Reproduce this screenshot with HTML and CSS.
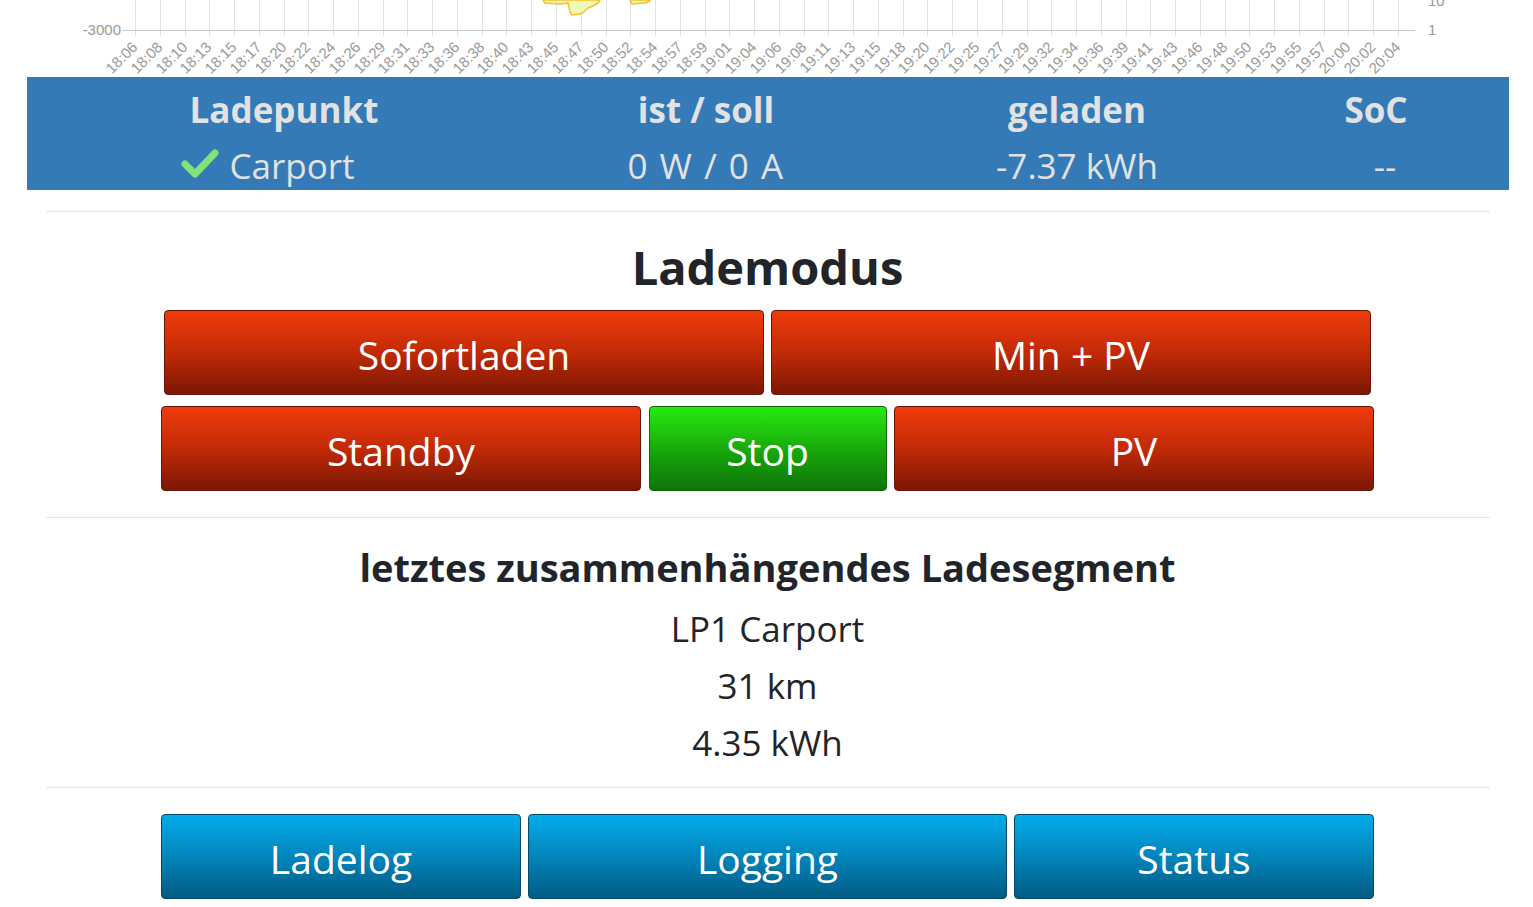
FILE: index.html
```html
<!DOCTYPE html>
<html lang="de">
<head>
<meta charset="utf-8">
<title>openWB</title>
<link rel="stylesheet" href="styles.css">
</head>
<body>
<div class="page">
  <div class="chart">
    <svg id="chart" width="1533" height="77" viewBox="0 0 1533 77" xmlns="http://www.w3.org/2000/svg">
      <g id="grid" stroke="#e3e3e3" stroke-width="1"></g>
      <polygon points="543,0 545,3 560,4 568,3 570,12 572,15 580,14 584,12 588,8 593,6 598,3 600,0" fill="#eef8b8" stroke="#f6c02a" stroke-width="1.5"/>
      <polygon points="630,0 632,4 645,3 650,1 650,0" fill="#eef8b8" stroke="#f6c02a" stroke-width="1.5"/>
      <line x1="122" y1="30.5" x2="1415" y2="30.5" stroke="#c8c8c8" stroke-width="1"/>
      <text x="121" y="35" text-anchor="end" class="axis-label">-3000</text>
      <text x="1428" y="35" class="axis-label">1</text>
      <text x="1428" y="6" class="axis-label">10</text>
      <g id="labels"></g>
    </svg>
  </div>

  <div class="lp-table">
    <div class="lp-row lp-head">
      <div class="c1">Ladepunkt</div>
      <div class="c2">ist / soll</div>
      <div class="c3">geladen</div>
      <div class="c4">SoC</div>
    </div>
    <div class="lp-row lp-data">
      <div class="c1 lp-name"><svg class="check" width="38" height="30" viewBox="0 0 38 30"><polyline points="4,15 14,25 34,4" fill="none" stroke="#84e27c" stroke-width="7" stroke-linecap="round" stroke-linejoin="round"/></svg><span>Carport</span></div>
      <div class="c2 power">0 W / 0 A</div>
      <div class="c3">-7.37 kWh</div>
      <div class="c4 soc">--</div>
    </div>
  </div>

  <hr class="sep sep1">

  <h2 class="title">Lademodus</h2>
  <div class="btn-row row1">
    <button class="btn red w600">Sofortladen</button>
    <button class="btn red w600">Min + PV</button>
  </div>
  <div class="btn-row row2">
    <button class="btn red w480">Standby</button>
    <button class="btn green w238">Stop</button>
    <button class="btn red w480">PV</button>
  </div>

  <hr class="sep sep2">

  <h3 class="subtitle">letztes zusammenhängendes Ladesegment</h3>
  <div class="seg">
    <div>LP1 Carport</div>
    <div>31 km</div>
    <div>4.35 kWh</div>
  </div>

  <hr class="sep sep3">

  <div class="btn-row row3">
    <button class="btn blue w360">Ladelog</button>
    <button class="btn blue w479">Logging</button>
    <button class="btn blue w360">Status</button>
  </div>
</div>
<script src="chart.js"></script>
</body>
</html>
```
FILE: chart.js
```js
(function () {
  var labels = ["18:06","18:08","18:10","18:13","18:15","18:17","18:20","18:22","18:24","18:26","18:29","18:31","18:33","18:36","18:38","18:40","18:43","18:45","18:47","18:50","18:52","18:54","18:57","18:59","19:01","19:04","19:06","19:08","19:11","19:13","19:15","19:18","19:20","19:22","19:25","19:27","19:29","19:32","19:34","19:36","19:39","19:41","19:43","19:46","19:48","19:50","19:53","19:55","19:57","20:00","20:02","20:04"];
  var ns = "http://www.w3.org/2000/svg";
  var grid = document.getElementById("grid");
  var lab = document.getElementById("labels");
  var x0 = 135, x1 = 1398;
  var step = (x1 - x0) / (labels.length - 1);
  for (var i = 0; i < labels.length; i++) {
    var x = Math.round(x0 + i * step) + 0.5;
    var l = document.createElementNS(ns, "line");
    l.setAttribute("x1", x); l.setAttribute("x2", x);
    l.setAttribute("y1", 0); l.setAttribute("y2", 36);
    grid.appendChild(l);
    var t = document.createElementNS(ns, "text");
    t.setAttribute("class", "tick-label");
    t.setAttribute("text-anchor", "end");
    t.setAttribute("transform", "translate(" + (x + 3) + ",48) rotate(-45)");
    t.textContent = labels[i];
    lab.appendChild(t);
  }
})();
```
FILE: styles.css
```css
html, body {
  margin: 0;
  padding: 0;
  background: #ffffff;
}
body {
  font-family: "Open Sans", "Noto Sans", "DejaVu Sans", sans-serif;
  color: #212529;
  width: 1533px;
  overflow: hidden;
}
.page {
  display: flex;
  flex-direction: column;
  align-items: center;
  padding-left: 2px;
}
.chart {
  height: 77px;
  width: 1533px;
  overflow: hidden;
  margin-left: -2px;
}
.chart svg {
  display: block;
}
.axis-label {
  font-family: "Liberation Sans", Arial, sans-serif;
  font-size: 15px;
  fill: #9a9a9a;
}
.tick-label {
  font-family: "Liberation Sans", Arial, sans-serif;
  font-size: 15px;
  fill: #9a9a9a;
}
.lp-table {
  width: 1482px;
  align-self: flex-start;
  margin-left: 25px;
  background: #337ab7;
  color: #e2e2e2;
}
.lp-row {
  display: grid;
  grid-template-columns: 514px 330px 412px 186px 40px;
  text-align: center;
  white-space: nowrap;
}
.lp-head {
  height: 64px;
  align-items: center;
  font-weight: 700;
  font-size: 35px;
}
.lp-data {
  height: 49px;
  align-items: center;
  font-size: 35px;
}
.lp-name {
  display: flex;
  justify-content: center;
  align-items: center;
  gap: 10px;
  padding-right: 32px;
}
.check {
  display: block;
  margin-top: -4px;
}
.power {
  letter-spacing: 1.5px;
}
.soc {
  padding-left: 18px;
}
.sep {
  width: 1444px;
  border: 0;
  border-top: 1px solid #e6e6e6;
  margin: 0;
  box-sizing: border-box;
}
.sep1 { margin-top: 21px; }
.sep2 { margin-top: 26px; }
.sep3 { margin-top: 16px; }
.title {
  margin: 27px 0 0;
  font-size: 47px;
  line-height: 56px;
  font-weight: 700;
}
.btn-row {
  display: flex;
  gap: 7px;
}
.row1 { margin-top: 15px; }
.row2 { margin-top: 11px; gap: 7.5px; }
.row3 { margin-top: 26px; }
.btn {
  font-family: "Open Sans", "Noto Sans", sans-serif;
  font-size: 39px;
  color: #ffffff;
  height: 85px;
  border-radius: 4px;
  padding: 4px 0 0;
  margin: 0;
  box-sizing: border-box;
  cursor: pointer;
}
.red {
  background: linear-gradient(to bottom, #ef3b0d 0%, #c22a07 50%, #7a1704 100%);
  border: 1px solid #6a1403;
}
.green {
  background: linear-gradient(to bottom, #26ea0e 0%, #169f0b 60%, #0e7508 100%);
  border: 1px solid #0c6507;
}
.blue {
  background: linear-gradient(to bottom, #04abec 0%, #0285bb 50%, #035b83 100%);
  border: 1px solid #024a6a;
}
.w600 { width: 600px; }
.w480 { width: 480px; }
.w238 { width: 238px; }
.w360 { width: 360px; }
.w479 { width: 479px; }
.subtitle {
  margin: 24px 0 0;
  font-size: 38px;
  line-height: 50px;
  font-weight: 700;
}
.seg {
  margin-top: 8px;
  text-align: center;
  font-size: 35px;
  line-height: 57px;
}
```
